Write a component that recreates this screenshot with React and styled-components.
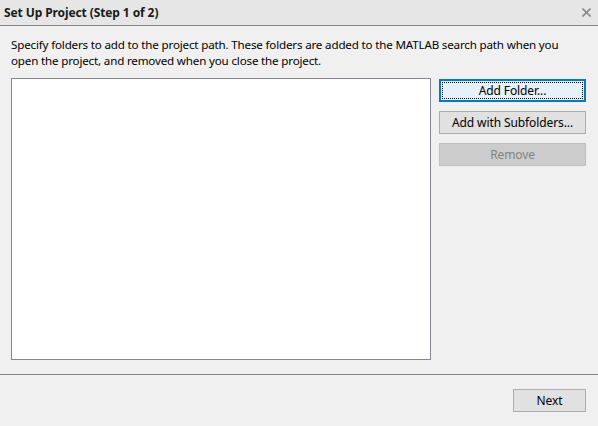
import React from "react";
import styled, { createGlobalStyle } from "styled-components";

const Global = createGlobalStyle`
  html, body { margin: 0; padding: 0; background: #f0f0f0; }
  body { font-family: "Noto Sans", "Open Sans", sans-serif; }
`;

const Dialog = styled.div`
  width: 598px;
  height: 426px;
  display: flex;
  flex-direction: column;
  background: #f0f0f0;
  font-family: "Noto Sans", "Open Sans", sans-serif;
  font-size: 12px;
  color: #000;
  overflow: hidden;
`;

const TitleBar = styled.div`
  height: 26px;
  box-sizing: border-box;
  flex: none;
  display: flex;
  align-items: center;
  justify-content: space-between;
  padding: 0 7px 0 4px;
  background: #e6e6e6;
  border-bottom: 1px solid #848484;
`;

const Title = styled.span`
  font-weight: 700;
  font-size: 12px;
  letter-spacing: -0.1px;
  color: #1a1a1a;
`;

const Close = styled.button`
  border: 0;
  background: none;
  padding: 0;
  width: 9px;
  height: 9px;
  display: flex;
  cursor: pointer;
`;

const Body = styled.div`
  flex: 1;
  display: flex;
  flex-direction: column;
  padding: 11px 12px 14px 11px;
  min-height: 0;
`;

const Description = styled.p`
  margin: 0 0 9px;
  line-height: 16px;
  font-size: 11.6px;
  letter-spacing: -0.17px;
  white-space: nowrap;
`;

const Row = styled.div`
  flex: 1;
  display: flex;
  gap: 8px;
  min-height: 0;
`;

const ListBox = styled.div`
  width: 420px;
  box-sizing: border-box;
  background: #fff;
  border: 1px solid #828790;
`;

const ButtonColumn = styled.div`
  flex: 1;
  display: flex;
  flex-direction: column;
  gap: 9px;
  padding-top: 1px;
`;

const Button = styled.button`
  position: relative;
  height: 23px;
  width: ${(p) => p.$width || "100%"};
  box-sizing: border-box;
  font-family: inherit;
  font-size: 12px;
  letter-spacing: -0.1px;
  padding: 0;
  color: ${(p) => (p.disabled ? "#838383" : "#000")};
  background: ${(p) => (p.$focused ? "#e5f1fb" : p.disabled ? "#cccccc" : "#e1e1e1")};
  border: 1px solid ${(p) => (p.$focused ? "#0078d7" : p.disabled ? "#bfbfbf" : "#adadad")};
  outline: ${(p) => (p.$focused ? "1px solid #0078d7" : "none")};
  outline-offset: -2px;
  cursor: default;

  &::after {
    content: "";
    display: ${(p) => (p.$focused ? "block" : "none")};
    position: absolute;
    inset: 2px;
    border: 1px dotted #000;
  }
`;

const Footer = styled.div`
  flex: none;
  height: 52px;
  box-sizing: border-box;
  border-top: 1px solid #848484;
  display: flex;
  justify-content: flex-end;
  align-items: flex-start;
  padding: 14px 12px 0 0;
`;

export default function App() {
  return (
    <>
      <Global />
      <Dialog>
        <TitleBar>
          <Title>Set Up Project (Step 1 of 2)</Title>
          <Close aria-label="Close">
            <svg width="9" height="9" viewBox="0 0 9 9">
              <path d="M0.5 0.5 L8.5 8.5 M8.5 0.5 L0.5 8.5" stroke="#8a8a8a" strokeWidth="1.6" />
            </svg>
          </Close>
        </TitleBar>
        <Body>
          <Description>
            Specify folders to add to the project path. These folders are added to the MATLAB search path when you
            <br />
            open the project, and removed when you close the project.
          </Description>
          <Row>
            <ListBox />
            <ButtonColumn>
              <Button $focused>Add Folder...</Button>
              <Button>Add with Subfolders...</Button>
              <Button disabled>Remove</Button>
            </ButtonColumn>
          </Row>
        </Body>
        <Footer>
          <Button $width="73px">Next</Button>
        </Footer>
      </Dialog>
    </>
  );
}
